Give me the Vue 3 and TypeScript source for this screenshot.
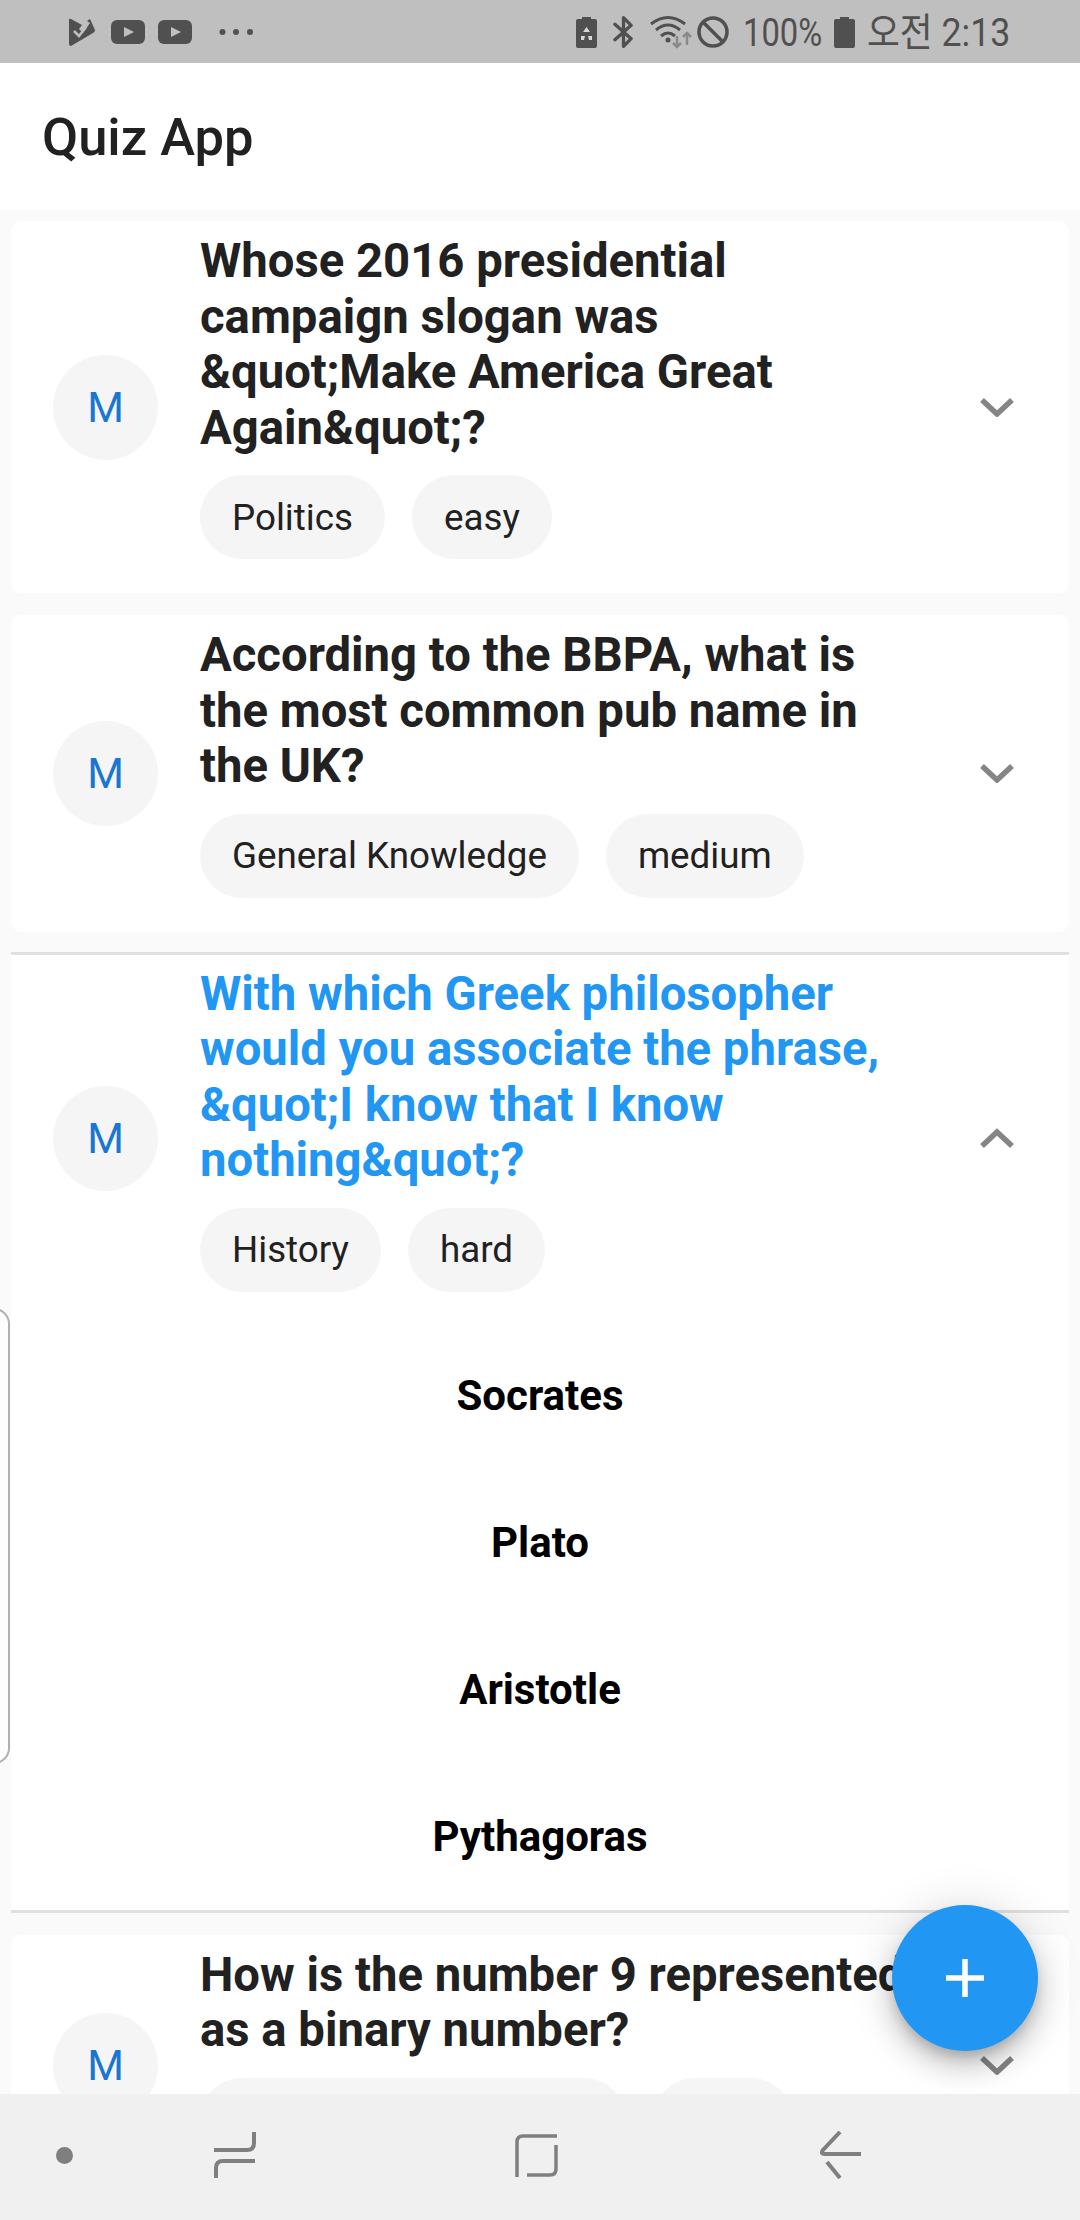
<script setup lang="ts">
interface Question {
  title: string
  category: string
  level: string
  open?: boolean
  answers?: string[]
}

const questions: Question[] = [
  {
    title: 'Whose 2016 presidential campaign slogan was &quot;Make America Great Again&quot;?',
    category: 'Politics',
    level: 'easy',
  },
  {
    title: 'According to the BBPA, what is the most common pub name in the UK?',
    category: 'General Knowledge',
    level: 'medium',
  },
  {
    title: 'With which Greek philosopher would you associate the phrase, &quot;I know that I know nothing&quot;?',
    category: 'History',
    level: 'hard',
    open: true,
    answers: ['Socrates', 'Plato', 'Aristotle', 'Pythagoras'],
  },
  {
    title: 'How is the number 9 represented as a binary number?',
    category: 'Science: Mathematics',
    level: 'easy',
  },
]
</script>

<template>
  <div class="screen">
    <div class="status">
      <div class="status-left">
        <svg width="26" height="28" viewBox="0 0 26 28">
          <path d="M0 2 Q0 0 2 1 L13 7 L10 11 L14 15 L21 5 L18 3 L21 1 L26 12 Q26 14 24 15 L2 28 Q0 28 0 26 Z" fill="#505050" />
          <path d="M5 13 L10 18 L17 9" fill="none" stroke="#bfbfbf" stroke-width="2.500" />
        </svg>
        <svg class="yt" width="34" height="24" viewBox="0 0 34 24">
          <rect width="34" height="24" rx="6" fill="#505050" />
          <path d="M13 7 L23 12 L13 17 Z" fill="#bfbfbf" />
        </svg>
        <svg class="yt2" width="34" height="24" viewBox="0 0 34 24">
          <rect width="34" height="24" rx="6" fill="#505050" />
          <path d="M13 7 L23 12 L13 17 Z" fill="#bfbfbf" />
        </svg>
        <svg class="dots" width="34" height="8" viewBox="0 0 34 8">
          <circle cx="3.500" cy="4" r="3" fill="#505050" />
          <circle cx="17" cy="4" r="3" fill="#505050" />
          <circle cx="31" cy="4" r="3" fill="#505050" />
        </svg>
      </div>
      <div class="status-right">
        <svg width="21" height="32" viewBox="0 0 21 32">
          <path d="M6 3 V1 H15 V3 H19 Q21 3 21 5 V30 Q21 32 19 32 H2 Q0 32 0 30 V5 Q0 3 2 3 Z" fill="#505050" />
          <path d="M10.500 11 L14 16 L7 16 Z M5 20 L9 20 L8 24 L5 24 Z M16 20 L12 20 L13 24 L16 24 Z" fill="#d8d8d8" />
        </svg>
        <svg class="bt" width="21" height="34" viewBox="0 0 22 34">
          <path d="M2 9 L19 24 L11 32 V2 L19 10 L2 25" fill="none" stroke="#505050" stroke-width="3.500" stroke-linejoin="round" stroke-linecap="round" />
        </svg>
        <svg class="wifi" width="42" height="34" viewBox="0 0 42 34">
          <path d="M1 9 Q18 -4 35 9 M6 15 Q18 5 30 15 M11 21 Q18 15 25 21" fill="none" stroke="#505050" stroke-width="3" />
          <circle cx="18" cy="25" r="2.500" fill="#505050" />
          <path d="M27 21 V32 M23 28 L27 32 L31 28" fill="none" stroke="#8a8a8a" stroke-width="2.500" />
          <path d="M37 30 V18 M33 22 L37 18 L41 22" fill="none" stroke="#8a8a8a" stroke-width="2.500" />
        </svg>
        <svg class="block" width="32" height="32" viewBox="0 0 32 32">
          <circle cx="16" cy="16" r="14" fill="none" stroke="#505050" stroke-width="3.500" />
          <path d="M6 6 L26 26" stroke="#505050" stroke-width="3.500" />
        </svg>
        <span class="pct">100%</span>
        <svg class="batt" width="21" height="32" viewBox="0 0 21 32">
          <path d="M6 3 V1 H15 V3 H19 Q21 3 21 5 V30 Q21 32 19 32 H2 Q0 32 0 30 V5 Q0 3 2 3 Z" fill="#505050" />
        </svg>
        <span class="clock">오전 2:13</span>
      </div>
    </div>

    <header class="appbar">Quiz App</header>

    <main class="list">
      <section
        v-for="q in questions"
        :key="q.title"
        class="card"
        :class="{ open: q.open }"
      >
        <div class="row">
          <div class="avatar">M</div>
          <div class="body">
            <h2 class="title">{{ q.title }}</h2>
            <div class="chips">
              <span class="chip">{{ q.category }}</span>
              <span class="chip">{{ q.level }}</span>
            </div>
          </div>
          <svg class="chevron" width="34" height="20" viewBox="0 0 34 20">
            <path :d="q.open ? 'M2 18 L17 4 L32 18' : 'M2 3 L17 17 L32 3'" fill="none" stroke="#858585" stroke-width="5.500" />
          </svg>
        </div>
        <div v-if="q.answers" class="answers">
          <div v-for="a in q.answers" :key="a" class="answer">{{ a }}</div>
        </div>
      </section>
    </main>

    <nav class="navbar">
      <span class="dot"></span>
      <svg class="recents" width="44" height="48" viewBox="0 0 44 48">
        <path d="M1 19 H34 Q41 19 41 12 V1" fill="none" stroke="#7f7f7f" stroke-width="4" />
        <path d="M42 30 H10 Q3 30 3 37 V47" fill="none" stroke="#7f7f7f" stroke-width="4" />
      </svg>
      <svg class="home" width="44" height="46" viewBox="0 0 44 46">
        <path d="M42 4 H8 Q2 4 2 10 V45" fill="none" stroke="#7f7f7f" stroke-width="3.500" />
        <path d="M41 13 V37 Q41 43 35 43 H12" fill="none" stroke="#7f7f7f" stroke-width="3.500" />
      </svg>
      <svg class="back" width="44" height="48" viewBox="0 0 44 48">
        <path d="M21 1 L4 19 Q1 23 6 23 H42" fill="none" stroke="#7f7f7f" stroke-width="4" />
        <path d="M8 31 L21 47" fill="none" stroke="#7f7f7f" stroke-width="4" />
      </svg>
    </nav>

    <button class="fab" type="button" aria-label="Add">
      <svg width="38" height="38" viewBox="0 0 38 38">
        <path d="M19 0 V38 M0 19 H38" stroke="#fff" stroke-width="5.500" />
      </svg>
    </button>

    <div class="edge-handle"></div>
  </div>
</template>

<style scoped>
.screen {
  position: relative;
  width: 1080px;
  height: 2220px;
  display: flex;
  flex-direction: column;
  overflow: hidden;
  background: #fafafa;
  font-family: Roboto, "Noto Sans", sans-serif;
  color: #212121;
}

.status {
  flex: none;
  height: 63px;
  background: #bfbfbf;
  display: flex;
  align-items: center;
  justify-content: space-between;
  padding: 0 70px 0 69px;
  color: #505050;
}

.status-left,
.status-right {
  display: flex;
  align-items: center;
}

.yt { margin-left: 16px; }
.yt2 { margin-left: 13px; }
.dots { margin-left: 27px; }
.bt { margin-left: 16px; }
.wifi { margin-left: 16px; }
.block { margin-left: 5px; }

.pct,
.clock {
  font-size: 39px;
  line-height: 59px;
  padding-top: 4px;
  display: inline-block;
  white-space: nowrap;
  transform-origin: left center;
}

.pct {
  transform: scaleX(0.84);
  margin-left: 14px;
  width: 78px;
}

.batt { margin-left: 13px; }

.clock {
  font-family: Roboto, "Noto Sans CJK KR", sans-serif;
  transform: scaleX(0.915);
  margin-left: 12px;
  width: 143px;
}

.appbar {
  flex: none;
  height: 147px;
  display: flex;
  align-items: center;
  padding-left: 42px;
  background: #fff;
  font-size: 52.5px;
  font-weight: 500;
}

.list {
  flex: 1;
  min-height: 0;
  overflow: hidden;
  padding: 11px 11px 0;
  display: flex;
  flex-direction: column;
  gap: 22px;
}

.card {
  flex: none;
  background: #fff;
  border-radius: 11px;
}

.card.open {
  border-radius: 0;
  border-top: 3px solid #e0e0e0;
  border-bottom: 3px solid #e0e0e0;
  margin-top: -2px;
}

.row {
  display: flex;
  align-items: center;
  padding-left: 42px;
}

.avatar {
  flex: none;
  width: 105px;
  height: 105px;
  border-radius: 50%;
  background: #f5f5f5;
  color: #1976d2;
  font-size: 42px;
  display: flex;
  align-items: center;
  justify-content: center;
}

.body {
  flex: none;
  width: 715px;
  margin-left: 42px;
  padding: 13px 0 34px;
}

.open .body {
  padding: 12px 0 30px;
}

.title {
  margin: 0;
  font-size: 47.25px;
  line-height: 55.5px;
  font-weight: 700;
  color: #212121;
}

.open .title {
  color: #2196f3;
}

.chips {
  display: flex;
  gap: 27px;
  margin-top: 19px;
}

.chip {
  height: 84px;
  border-radius: 42px;
  background: #f5f5f5;
  padding: 0 32px;
  font-size: 36.75px;
  display: flex;
  align-items: center;
}

.chevron {
  flex: none;
  margin-left: 65px;
}

.answer {
  height: 147px;
  display: flex;
  align-items: center;
  justify-content: center;
  font-size: 42px;
  font-weight: 700;
  color: #000;
}

.navbar {
  flex: none;
  position: relative;
  z-index: 1;
  height: 126px;
  background: #f0f0f0;
  display: flex;
  align-items: center;
  padding: 0 0 4px 56px;
  box-sizing: border-box;
}

.dot {
  width: 17px;
  height: 17px;
  border-radius: 50%;
  background: #7f7f7f;
}

.recents { margin-left: 140px; }
.home { margin-left: 258px; }
.back { margin-left: 260px; }

.fab {
  position: absolute;
  left: 892px;
  top: 1905px;
  width: 146px;
  height: 146px;
  border: none;
  padding: 0;
  border-radius: 50%;
  background: #2196f3;
  display: flex;
  align-items: center;
  justify-content: center;
  box-shadow: 0 8px 13px -3px rgba(0, 0, 0, 0.2), 0 16px 26px 2px rgba(0, 0, 0, 0.14), 0 3px 47px 3px rgba(0, 0, 0, 0.12);
}

.edge-handle {
  position: absolute;
  left: -22px;
  top: 1308px;
  width: 28px;
  height: 452px;
  border: 2px solid #b0b0b0;
  border-radius: 16px;
  background: #fdfdfd;
}
</style>
